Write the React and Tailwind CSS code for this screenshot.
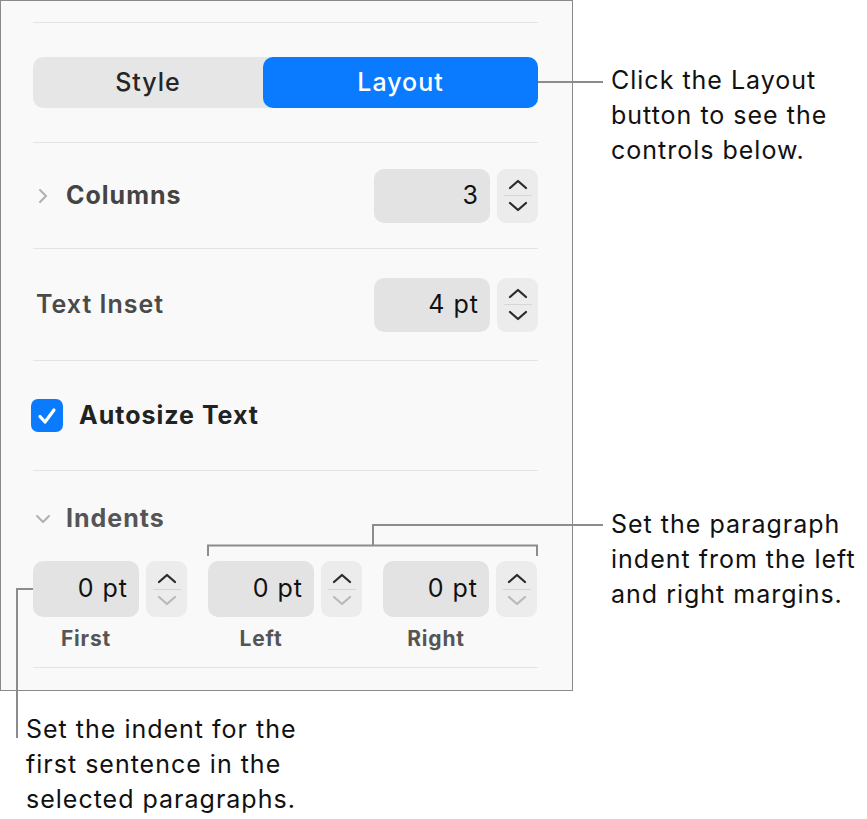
import React from 'react';

const font = { fontFamily: 'Inter, "Noto Sans", sans-serif' };

function Chevron({ dir = 'up', color = '#2b2b2b' }) {
  const d = dir === 'up' ? 'M2 9 L10 2 L18 9' : 'M2 2 L10 9 L18 2';
  return (
    <svg width="20" height="11" viewBox="0 0 20 11" fill="none">
      <path d={d} stroke={color} strokeWidth="2.3" strokeLinecap="round" strokeLinejoin="round" />
    </svg>
  );
}

function Stepper({ downDisabled = false }) {
  return (
    <div className="flex w-[41px] shrink-0 flex-col items-center justify-center gap-[5px] self-stretch rounded-[9px] bg-[#ececec]">
      <Chevron dir="up" />
      <div className="h-px w-[28px] bg-[#d6d6d6]" />
      <Chevron dir="down" color={downDisabled ? '#b9b9b9' : '#2b2b2b'} />
    </div>
  );
}

function Field({ value, className }) {
  return (
    <div className={`flex items-center justify-end rounded-[10px] bg-[#e3e3e3] pr-[11px] text-[25px] tracking-[0.04em] text-[#111] ${className}`}>
      {value}
    </div>
  );
}

function Divider() {
  return <div className="h-px w-[505px] bg-[#e4e4e4]" />;
}

function IndentControl({ label }) {
  return (
    <div className="flex flex-col">
      <div className="flex h-[56px] gap-[7px]">
        <Field value="0 pt" className="w-[106px]" />
        <Stepper downDisabled />
      </div>
      <div className="mt-[10px] w-[106px] text-center text-[21px] font-bold leading-[24px] tracking-[0.04em] text-[#555]">{label}</div>
    </div>
  );
}

function Callouts() {
  return (
    <svg className="pointer-events-none absolute left-0 top-0" width="867" height="819" fill="none">
      <g stroke="#8c8c8c" strokeWidth="2">
        <path d="M538 82 H603" />
        <path d="M208 556 V545.5 H537 V556" />
        <path d="M373 545.5 V525 H603" />
        <path d="M33 589 H17 V738" />
      </g>
    </svg>
  );
}

export default function App() {
  return (
    <div className="relative h-[819px] w-[867px] bg-white" style={font}>
      <div className="flex h-[691px] w-[573px] flex-col border border-[#8a8a8a] bg-[#f9f9f9] pl-[32px]">
        <div className="h-[21px]" />
        <Divider />

        <div className="flex h-[119px] items-center">
          <div className="flex h-[51px] w-[505px] rounded-[10px] bg-[#e6e6e6] text-[25px] font-medium tracking-[0.04em]">
            <div className="flex w-[230px] items-center justify-center text-[#262626]">Style</div>
            <div className="flex flex-1 items-center justify-center rounded-[10px] bg-[#0a7aff] text-white">Layout</div>
          </div>
        </div>
        <Divider />

        <div className="flex h-[105px] w-[505px] items-center">
          <svg width="12" height="16" viewBox="0 0 12 16" fill="none" className="ml-[4px]">
            <path d="M3 2 L9 8 L3 14" stroke="#b0b0b0" strokeWidth="2" strokeLinecap="round" strokeLinejoin="round" />
          </svg>
          <span className="ml-[17px] text-[25px] font-bold tracking-[0.04em] text-[#444]">Columns</span>
          <div className="ml-auto flex h-[54px] gap-[7px]">
            <Field value="3" className="w-[116px]" />
            <Stepper />
          </div>
        </div>
        <Divider />

        <div className="flex h-[111px] w-[505px] items-center">
          <span className="ml-[3px] text-[25px] font-semibold tracking-[0.04em] text-[#4a4a4a]">Text Inset</span>
          <div className="ml-auto flex h-[54px] gap-[7px]">
            <Field value="4 pt" className="w-[116px]" />
            <Stepper />
          </div>
        </div>
        <Divider />

        <div className="flex h-[109px] items-center">
          <div className="-ml-[2px] flex h-[33px] w-[32px] items-center justify-center rounded-[7px] bg-[#0a7aff]">
            <svg width="20" height="18" viewBox="0 0 20 18" fill="none">
              <path d="M3 9.5 L8 15 L17 3" stroke="white" strokeWidth="3.2" strokeLinecap="round" strokeLinejoin="round" />
            </svg>
          </div>
          <span className="ml-[16px] text-[25px] font-bold tracking-[0.04em] text-[#222]">Autosize Text</span>
        </div>
        <Divider />

        <div className="flex h-[196px] flex-col">
          <div className="mt-[33px] flex h-[30px] items-center">
            <svg width="16" height="12" viewBox="0 0 16 12" fill="none" className="ml-[2px]">
              <path d="M2 3 L8 9 L14 3" stroke="#b0b0b0" strokeWidth="2" strokeLinecap="round" strokeLinejoin="round" />
            </svg>
            <span className="ml-[15px] text-[25px] font-bold tracking-[0.04em] text-[#555]">Indents</span>
          </div>
          <div className="mt-[27px] grid w-[505px] grid-cols-3 gap-[20px]">
            <IndentControl label="First" />
            <IndentControl label="Left" />
            <IndentControl label="Right" />
          </div>
        </div>
        <Divider />
      </div>

      <Callouts />

      <p className="absolute left-[611px] top-[63px] text-[25px] leading-[35px] tracking-[0.04em] text-[#111]">
        Click the Layout<br />button to see the<br />controls below.
      </p>
      <p className="absolute left-[611px] top-[507px] text-[25px] leading-[35px] tracking-[0.04em] text-[#111]">
        Set the paragraph<br />indent from the left<br />and right margins.
      </p>
      <p className="absolute left-[26px] top-[712px] text-[25px] leading-[35px] tracking-[0.04em] text-[#111]">
        Set the indent for the<br />first sentence in the<br />selected paragraphs.
      </p>
    </div>
  );
}
